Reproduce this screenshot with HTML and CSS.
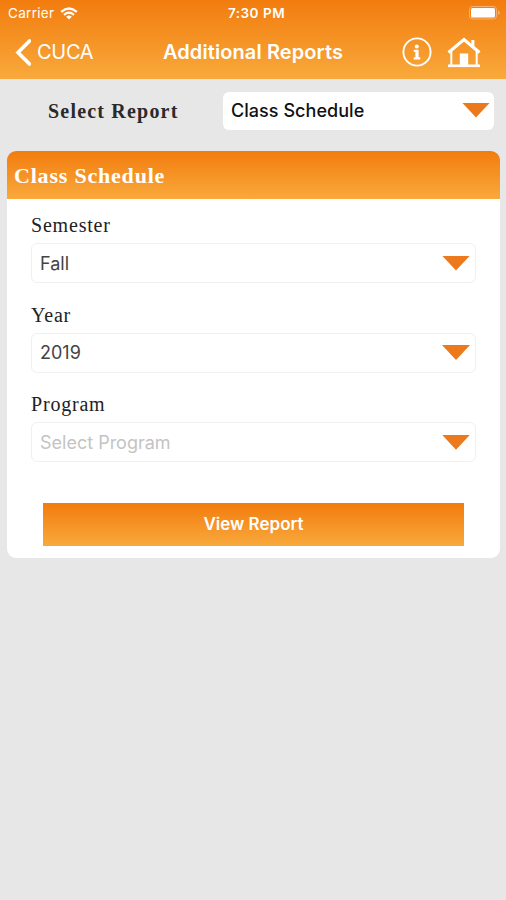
FILE: index.html
```html
<!DOCTYPE html>
<html lang="en">
<head>
  <meta charset="UTF-8" />
  <meta name="viewport" content="width=device-width, initial-scale=1.0"/>
  <title>Additional Reports</title>
  <link rel="stylesheet" href="styles.css">
</head>
<body>
<header class="top-bar">
  <div class="status-bar">
    <div class="carrier">
      <span>Carrier</span>
      <svg class="wifi" viewBox="0 0 18 13" width="18" height="13">
        <path d="M1.2 4.8 Q9 -1.8 16.8 4.8" fill="none" stroke="#fff" stroke-width="2.3"/>
        <path d="M4 7.8 Q9 3.6 14 7.8" fill="none" stroke="#fff" stroke-width="2.2"/>
        <path d="M6.2 9.7 Q9 7.2 11.8 9.7 L9 12.6 Z" fill="#fff"/>
      </svg>
    </div>
    <span class="time">7:30 PM</span>
    <svg class="battery" viewBox="0 0 32 14" width="32" height="14">
      <rect x="0.5" y="0.5" width="27" height="12.5" rx="3" fill="none" stroke="#f9b06c"/>
      <rect x="2" y="2" width="24" height="9.5" rx="1.5" fill="#fff"/>
      <path d="M29.3 4.5 Q32 6.7 29.3 9 Z" fill="#fbc48c"/>
    </svg>
  </div>
  <nav class="nav-bar">
    <a class="back">
      <svg viewBox="0 0 16 27" width="16" height="27">
        <path d="M14.5 2 L3 13.5 L14.5 25" fill="none" stroke="#fff" stroke-width="3.6" stroke-linecap="round"/>
      </svg>
      <span>CUCA</span>
    </a>
    <h1>Additional Reports</h1>
    <div class="nav-icons">
      <svg viewBox="0 0 30 30" width="30" height="30">
        <circle cx="15" cy="15" r="13.6" fill="none" stroke="#fff" stroke-width="1.9"/>
        <circle cx="14.8" cy="9.4" r="2" fill="#fff"/>
        <path d="M11.8 12.8 H16.6 V20.2 H18.2 V22.4 H11.8 V20.2 H13.4 V15 H11.8 Z" fill="#fff"/>
      </svg>
      <svg viewBox="0 0 34 31" width="34" height="31">
        <path d="M1.5 15.5 L17 2.5 L32.5 15.5" fill="none" stroke="#fff" stroke-width="3.2"/>
        <path d="M24.3 8 V3 H27.4 V11 Z" fill="#fff"/>
        <path d="M4.3 14 V28.5 M29.7 14 V28.5" stroke="#fff" stroke-width="2"/>
        <path d="M1 28.8 H33" stroke="#fff" stroke-width="2.6"/>
        <rect x="12.8" y="16.5" width="8.4" height="12" fill="#fff"/>
      </svg>
    </div>
  </nav>
</header>

<div class="report-row">
  <label class="report-label">Select Report</label>
  <div class="select report-select">
    <span>Class Schedule</span>
    <i class="arrow"></i>
  </div>
</div>

<section class="card">
  <h2>Class Schedule</h2>
  <div class="form">
    <label class="field-label">Semester</label>
    <div class="select"><span>Fall</span><i class="arrow"></i></div>
    <label class="field-label">Year</label>
    <div class="select"><span>2019</span><i class="arrow"></i></div>
    <label class="field-label">Program</label>
    <div class="select"><span class="placeholder">Select Program</span><i class="arrow"></i></div>
    <button class="view-btn">View Report</button>
  </div>
</section>
</body>
</html>
```
FILE: styles.css
```css
* {
  box-sizing: border-box;
}

body {
  margin: 0;
  min-height: 900px;
  background-color: #e7e7e7;
  font-family: Inter, "Liberation Sans", sans-serif;
  color: #111;
}

.top-bar {
  height: 79px;
  background: linear-gradient(#f27c0e, #f9a93c);
  color: #fff;
}

.status-bar {
  display: grid;
  grid-template-columns: 1fr auto 1fr;
  align-items: center;
  height: 26px;
  padding: 0 5px 0 8px;
  font-size: 13.5px;
}

.carrier {
  display: flex;
  align-items: center;
  gap: 6px;
  letter-spacing: 0.3px;
}

.time {
  padding-left: 4px;
  font-weight: 600;
  letter-spacing: 0.5px;
}

.battery {
  justify-self: end;
}

.nav-bar {
  display: grid;
  grid-template-columns: 1fr auto 1fr;
  align-items: center;
  height: 52px;
  padding: 0 15px;
}

.back {
  display: flex;
  align-items: center;
  gap: 6px;
  font-size: 20px;
  letter-spacing: -0.3px;
}

h1 {
  margin: 0;
  font-size: 20px;
  font-weight: 600;
  letter-spacing: 0.1px;
}

.nav-icons {
  display: flex;
  justify-content: flex-end;
  align-items: center;
  gap: 15px;
  padding-right: 10px;
}

.report-row {
  display: flex;
  align-items: center;
  height: 72px;
  padding: 0 12px 8px 48px;
}

.report-label {
  width: 175px;
  font-family: "Liberation Serif", serif;
  font-size: 20px;
  font-weight: bold;
  letter-spacing: 1.2px;
  color: #2a2a2a;
}

.select {
  display: flex;
  align-items: center;
  justify-content: space-between;
  height: 40px;
  padding: 0 5px 0 8px;
  border: 1px solid #f0f0f0;
  border-radius: 6px;
  background: #fff;
  color: #444;
  font-size: 18px;
}

.report-select {
  flex: 1;
  height: 38px;
  padding: 0 4px 2px 8px;
  border: none;
  color: #111;
  font-weight: 500;
  letter-spacing: 0.05px;
}

.arrow {
  width: 28px;
  height: 15px;
  background: #ec7a1c;
  clip-path: polygon(0 0, 100% 0, 50% 100%);
}

.card {
  height: 407px;
  margin: 0 6px 0 7px;
  border-radius: 9px;
  background: #fff;
  overflow: hidden;
}

h2 {
  height: 48px;
  margin: 0;
  padding-left: 7px;
  background: linear-gradient(#f27c0e, #f9a93c);
  color: #fff;
  font-family: "Liberation Serif", serif;
  font-size: 22px;
  line-height: 50px;
  letter-spacing: 0.8px;
}

.form {
  display: flex;
  flex-direction: column;
  padding: 16px 24px 0;
}

.field-label {
  height: 28px;
  font-family: "Liberation Serif", serif;
  font-size: 20px;
  line-height: 21px;
  letter-spacing: 0.8px;
  color: #222;
}

.form .select {
  margin-bottom: 21.6px;
}

.placeholder {
  color: #c4c4c4;
}

.view-btn {
  height: 43px;
  margin: 19px 12px 0;
  border: none;
  background: linear-gradient(#f27c0e, #f9a93c);
  color: #fff;
  font-family: inherit;
  font-size: 17px;
  font-weight: 600;
}
```
